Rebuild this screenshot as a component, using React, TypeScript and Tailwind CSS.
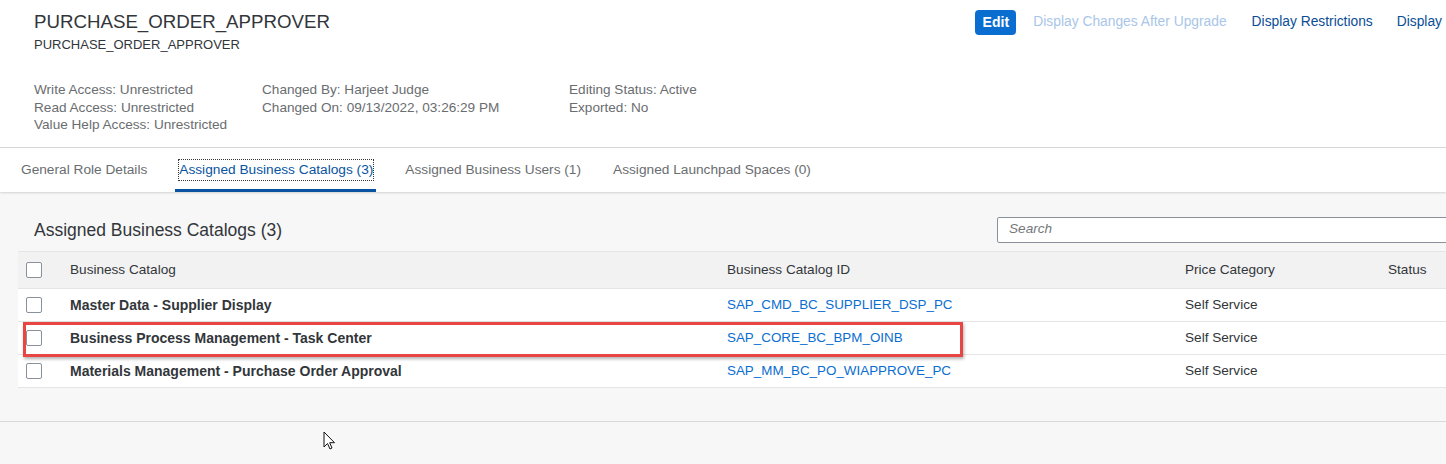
import React from 'react';

const ROWS = [
  { name: 'Master Data - Supplier Display', id: 'SAP_CMD_BC_SUPPLIER_DSP_PC', price: 'Self Service' },
  { name: 'Business Process Management - Task Center', id: 'SAP_CORE_BC_BPM_OINB', price: 'Self Service' },
  { name: 'Materials Management - Purchase Order Approval', id: 'SAP_MM_BC_PO_WIAPPROVE_PC', price: 'Self Service' },
];

const TABS = [
  'General Role Details',
  'Assigned Business Catalogs (3)',
  'Assigned Business Users (1)',
  'Assigned Launchpad Spaces (0)',
];

function Checkbox() {
  return <div className="h-4 w-4 rounded-[2px] border border-[#89919a] bg-white" />;
}

export default function App() {
  return (
    <div className="relative h-[464px] w-[1446px] overflow-hidden bg-[#f7f7f7] font-['Liberation_Sans',Arial,sans-serif] text-[13.6px] text-[#32363a]">
      {/* Header */}
      <div className="flex h-[148px] border-b border-[#d9d9d9] bg-white">
        <div className="flex-1 pl-[34px] pt-[10px]">
          <h1 className="text-[18.7px] leading-[24px]">PURCHASE_ORDER_APPROVER</h1>
          <p className="mt-[3px] text-[13px] leading-[16px]">PURCHASE_ORDER_APPROVER</p>
          <div className="mt-[28px] flex leading-[17.5px] text-[#6a6d70]">
            <div className="w-[228px]">
              <p>Write Access: Unrestricted</p>
              <p>Read Access: Unrestricted</p>
              <p>Value Help Access: Unrestricted</p>
            </div>
            <div className="w-[307px]">
              <p>Changed By: Harjeet Judge</p>
              <p>Changed On: 09/13/2022, 03:26:29 PM</p>
            </div>
            <div>
              <p>Editing Status: Active</p>
              <p>Exported: No</p>
            </div>
          </div>
        </div>
        <div className="mr-[4px] flex h-[44px] shrink-0 items-center whitespace-nowrap text-[13.8px]">
          <button className="h-[25px] w-[41px] rounded-[4px] bg-[#0a6ed1] text-[14px] font-bold text-white">Edit</button>
          <span className="ml-[17px] text-[#a9c6e8]">Display Changes After Upgrade</span>
          <span className="ml-[25px] text-[#0a4d95]">Display Restrictions</span>
          <span className="ml-[24px] text-[#0a4d95]">Display</span>
        </div>
      </div>

      {/* Tabs */}
      <div className="relative z-10 flex h-[44px] bg-white pl-[21px] shadow-[0_1px_2px_rgba(0,0,0,0.15)]">
        {TABS.map((t, i) => (
          <div key={t} className={`relative mr-[32px] flex items-center text-[13.7px] ${i === 1 ? 'text-[#0854a0]' : 'text-[#6a6d70]'}`}>
            <span className={i === 1 ? 'outline outline-1 outline-dotted outline-[#32363a]' : ''}>{t}</span>
            {i === 1 && <div className="absolute bottom-0 left-[-4px] right-[-3px] h-[3px] bg-[#0854a0]" />}
          </div>
        ))}
      </div>

      {/* Content */}
      <div className="pl-[18px]">
        <div className="flex h-[59px] items-center pt-[16px]">
          <h2 className="flex-1 pl-[16px] text-[17.5px] leading-[22px]">Assigned Business Catalogs (3)</h2>
          <div className="-mr-[20px] flex h-[26px] w-[469px] shrink-0 items-center rounded-l-[2px] border border-[#89919a] bg-white pl-[11px] text-[13.6px] italic text-[#74777a]">
            Search
          </div>
        </div>

        <div className="relative">
          <div className="grid h-[38px] grid-cols-[52px_657px_458px_203px_1fr] items-center border-y border-[#e5e5e5] bg-[#f2f2f2] text-[#32363a]">
            <div className="pl-[8px]"><Checkbox /></div>
            <div>Business Catalog</div>
            <div>Business Catalog ID</div>
            <div>Price Category</div>
            <div>Status</div>
          </div>
          {ROWS.map((r) => (
            <div key={r.id} className="grid h-[33px] grid-cols-[52px_657px_458px_203px_1fr] items-center border-b border-[#e5e5e5] bg-white">
              <div className="pl-[8px]"><Checkbox /></div>
              <div className="text-[14px] font-bold">{r.name}</div>
              <div className="text-[13.4px] text-[#0a6ed1]">{r.id}</div>
              <div>{r.price}</div>
              <div />
            </div>
          ))}
          {/* highlight annotation */}
          <div className="absolute left-[5px] top-[71px] h-[35px] w-[940px] border-[3px] border-[#e84545] shadow-[1px_2px_3px_rgba(0,0,0,0.3)]" />
        </div>
      </div>

      {/* Footer */}
      <div className="absolute bottom-0 left-0 right-0 h-[43px] border-t border-[#d9d9d9] bg-[#f7f7f7]" />

      {/* Cursor */}
      <svg className="absolute left-[323px] top-[431px]" width="13" height="20" viewBox="0 0 13 20">
        <path d="M1 1 L1 16 L4.5 12.5 L7 18 L9 17 L6.7 11.7 L11.5 11.7 Z" fill="white" stroke="#111" strokeWidth="1" strokeLinejoin="round" />
      </svg>
    </div>
  );
}
